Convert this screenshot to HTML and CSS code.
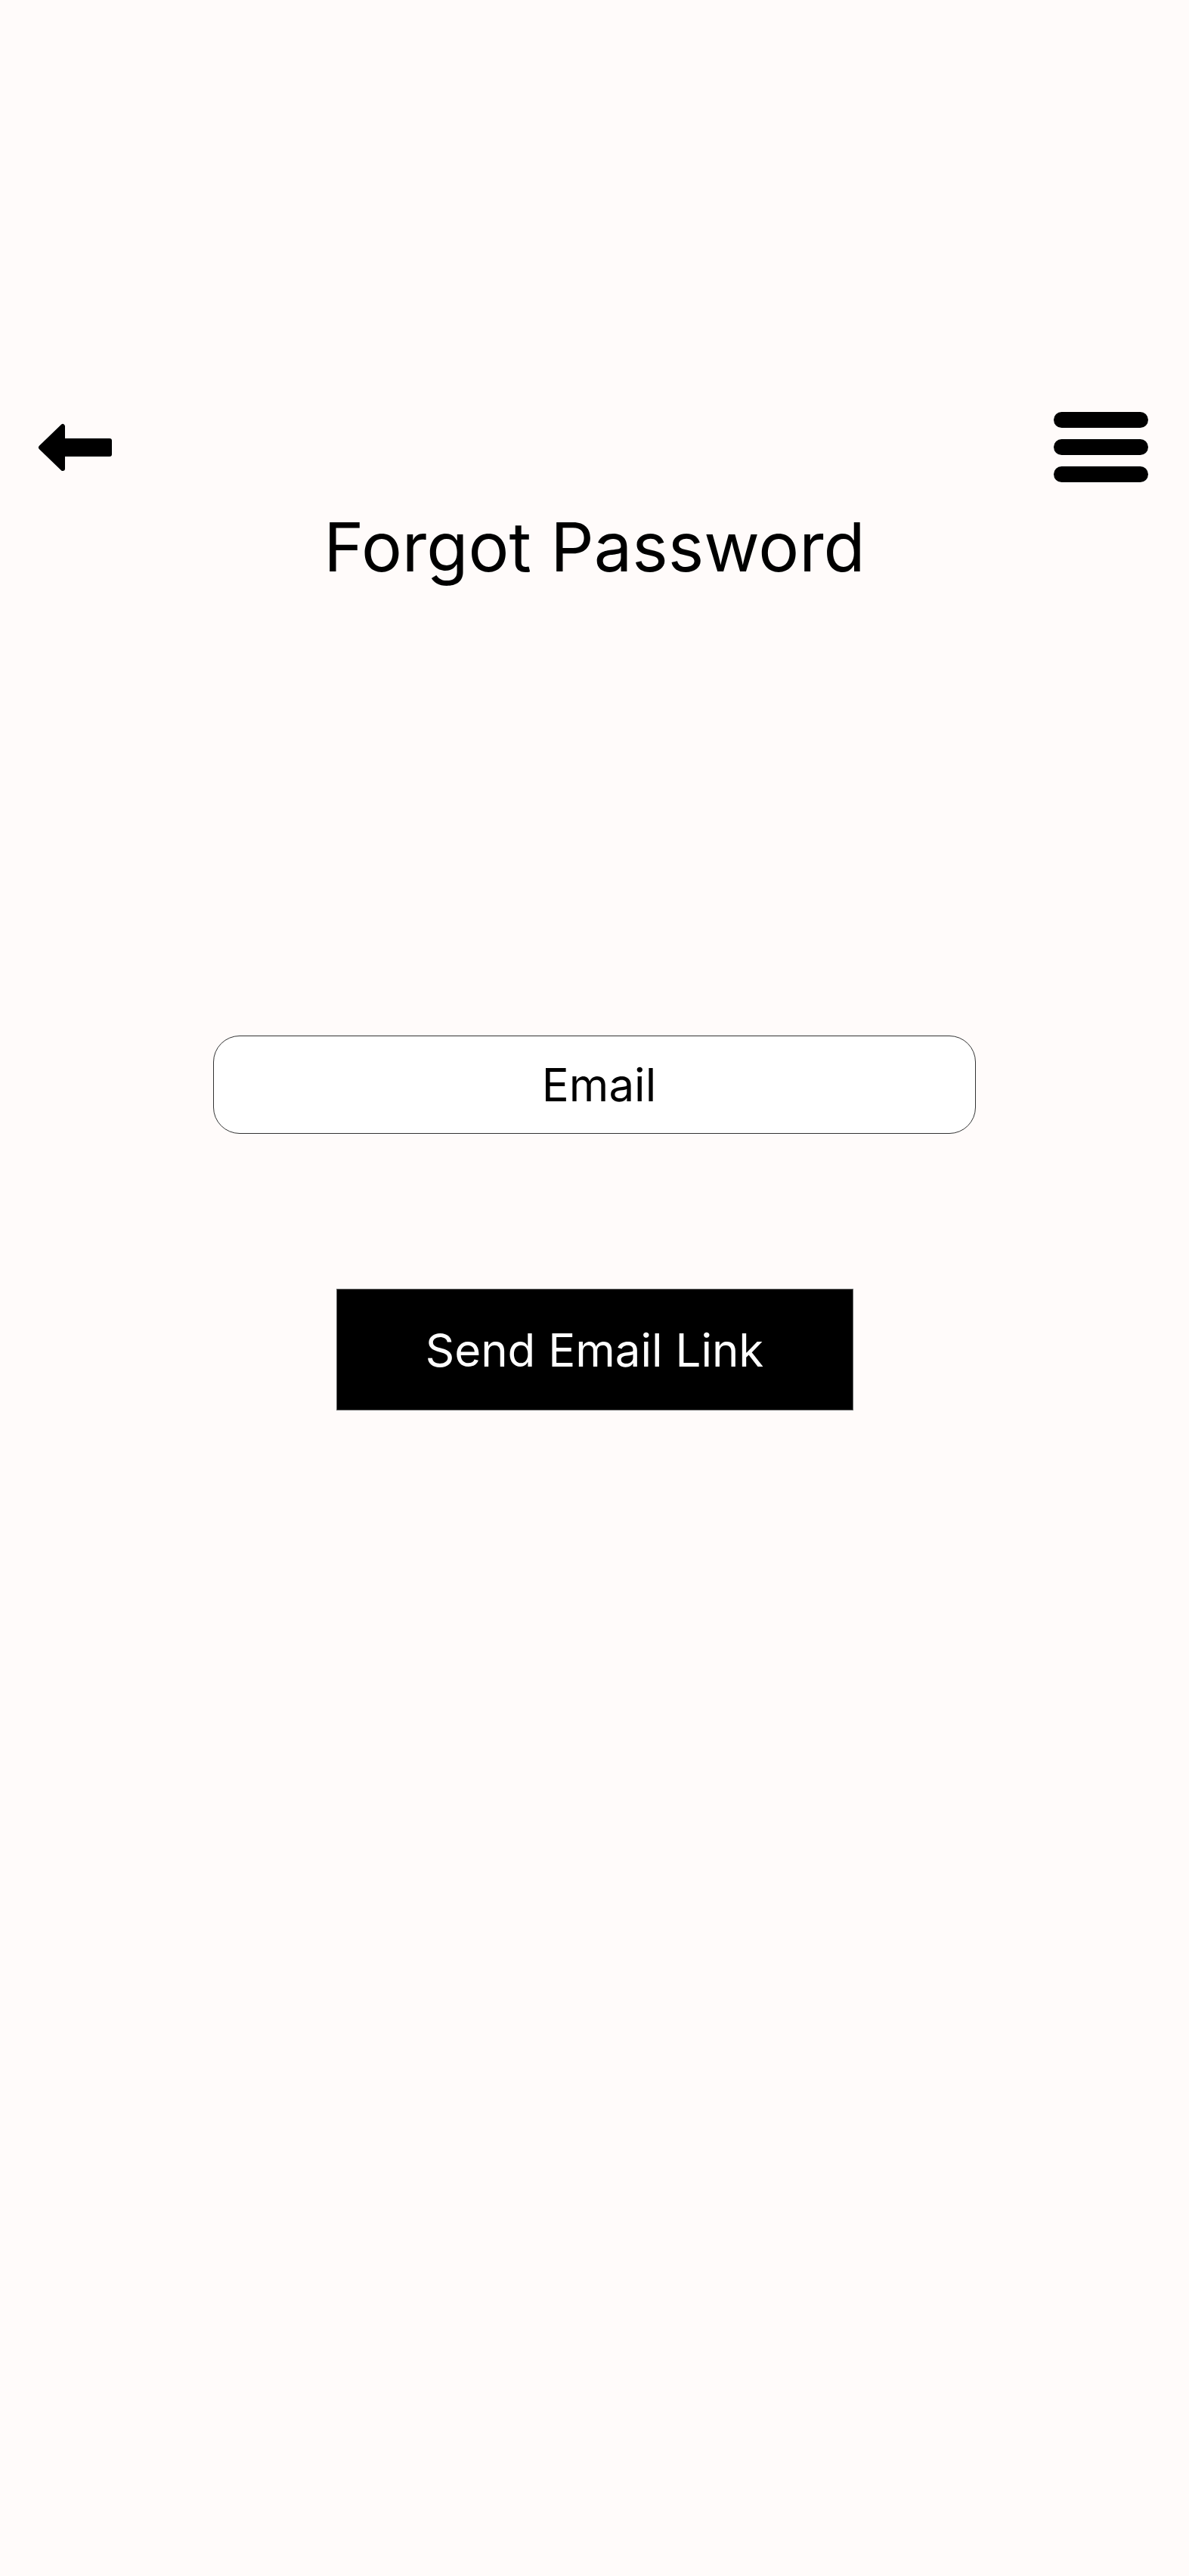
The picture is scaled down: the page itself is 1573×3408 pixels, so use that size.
FILE: index.html
```html
<!DOCTYPE html>
<html lang="en">
<head>
<meta charset="utf-8">
<title>Forgot Password</title>
<link rel="stylesheet" href="styles.css">
</head>
<body>
<div class="page">
  <header class="topbar">
    <button class="back" aria-label="Back">
      <svg width="100" height="66" viewBox="0 0 100 66">
        <polygon points="4,33 33,5 33,24 95,24 95,42 33,42 33,61" fill="#000" stroke="#000" stroke-width="6" stroke-linejoin="round"/>
      </svg>
    </button>
    <button class="menu" aria-label="Menu">
      <span class="bar"></span>
      <span class="bar"></span>
      <span class="bar"></span>
    </button>
  </header>
  <h1 class="title">Forgot Password</h1>
  <main class="form">
    <input class="email" type="email" placeholder="Email">
    <button class="send">Send Email Link</button>
  </main>
</div>
</body>
</html>
```
FILE: styles.css
```css
html, body {
  margin: 0;
  padding: 0;
  background: #fffbfa;
}
body {
  font-family: Inter, "Noto Sans", sans-serif;
  color: #000;
  min-height: 3408px;
}
.page {
  display: flex;
  flex-direction: column;
  padding-top: 545px;
}
.topbar {
  display: flex;
  justify-content: space-between;
  align-items: center;
  padding: 0 54px 0 50px;
}
.back, .menu {
  background: none;
  border: 0;
  padding: 0;
  margin: 0;
  cursor: pointer;
}
.back svg {
  display: block;
}
.menu {
  display: flex;
  flex-direction: column;
  gap: 15px;
}
.bar {
  display: block;
  width: 125px;
  height: 21px;
  border-radius: 11px;
  background: #000;
}
.title {
  margin: 31px 0 0;
  text-align: center;
  font-size: 90px;
  font-weight: 400;
  line-height: 110px;
}
.form {
  display: flex;
  flex-direction: column;
  align-items: center;
  margin-top: 591px;
  gap: 205px;
}
.email {
  box-sizing: border-box;
  width: 1009px;
  height: 130px;
  border: 1px solid #333;
  border-radius: 35px;
  background: #fff;
  font-family: Inter, "Noto Sans", sans-serif;
  font-size: 60px;
  text-align: center;
  padding: 0 0 0 12px;
  color: #000;
  outline: none;
}
.email::placeholder {
  color: #000;
  opacity: 1;
}
.send {
  box-sizing: border-box;
  width: 684px;
  height: 161px;
  background: #000;
  color: #fff;
  border: 1px solid #666;
  font-family: Inter, "Noto Sans", sans-serif;
  font-size: 60px;
  font-weight: 400;
  cursor: pointer;
}
```
